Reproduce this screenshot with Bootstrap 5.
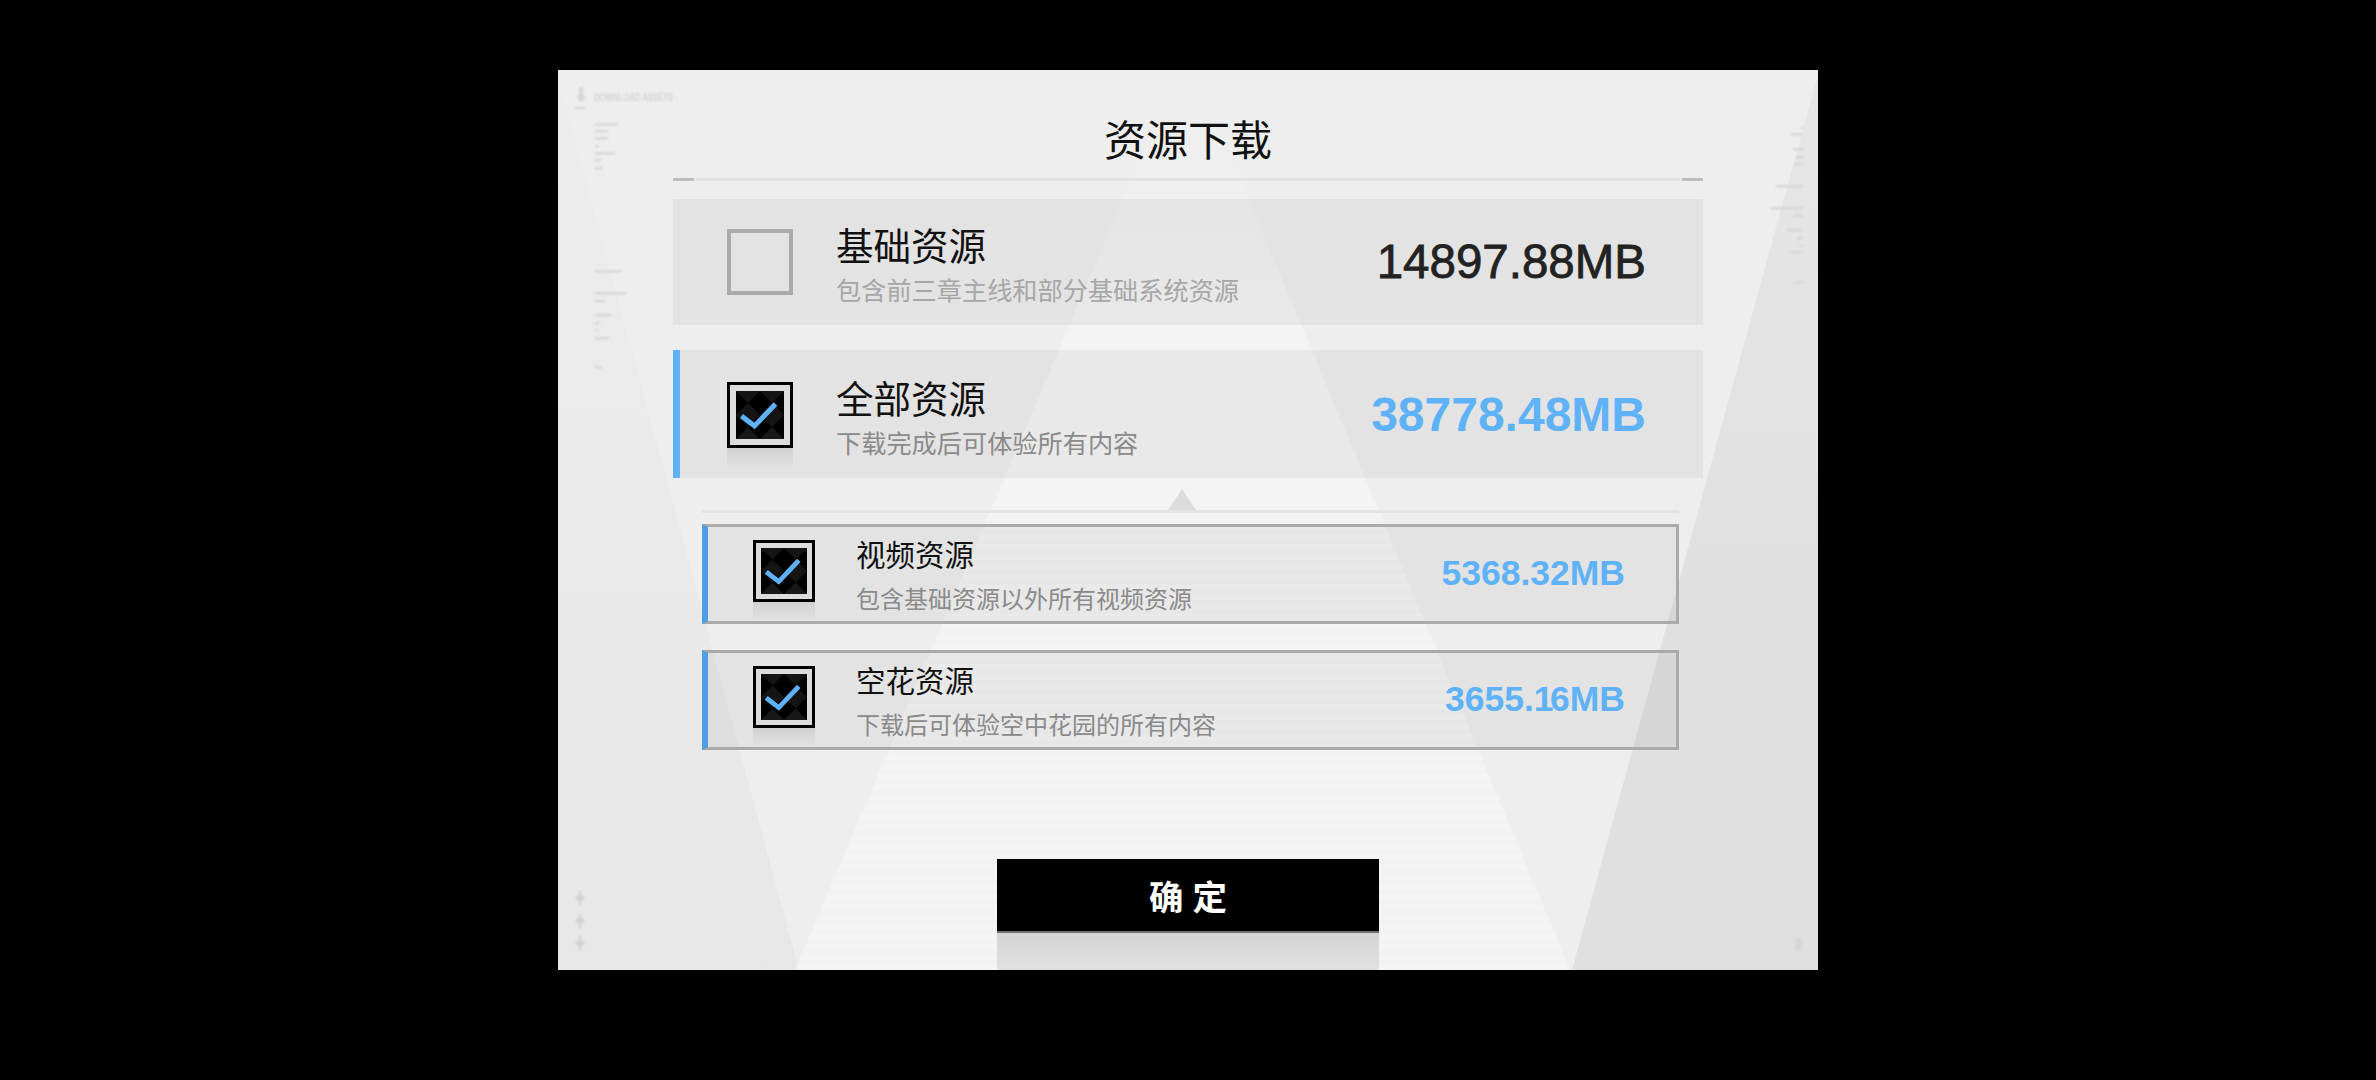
<!DOCTYPE html>
<html lang="zh-CN">
<head>
<meta charset="utf-8">
<title>资源下载</title>
<link href="https://cdn.jsdelivr.net/npm/bootstrap@5.3.0/dist/css/bootstrap.min.css" rel="stylesheet">
<style>
html,body{background:#000;margin:0;height:1080px;overflow:hidden}
body{font-family:"Noto Sans CJK SC","Liberation Sans",sans-serif}
.stage{width:1260px;height:900px;margin:70px auto 0;background:#eeeeee;position:relative;overflow:hidden}
.backdrop{position:absolute;left:0;top:0;width:1260px;height:900px}
.content{position:relative;height:900px;padding:0 115px}
.head-ttl{height:108px;margin:0;font-size:42px;font-weight:400;color:#111;line-height:1;padding-top:47px;text-align:center}
.head-rule{height:3px;background:#e2e2e2;margin-bottom:18px}
.head-rule i{display:block;width:21px;height:3px;background:#bcbcbc}
.dl-row{background:rgba(0,0,0,.042);height:126px;padding:0 57px 0 54px}
.dl-row.on{height:128px;margin-top:25px;border-left:7px solid #5fb1f8;padding-left:47px}
.cbx{width:66px;height:66px;flex:none;position:relative}
.cbx.off{border:4px solid #aaa}
.cbx.tick{border:3px solid #000;background:#dcdcdc;padding:6px}
.on>.cbx.tick{margin-top:2px}
.cbx.tick svg{display:block;width:100%;height:100%}
.cbx.tick::after{content:"";position:absolute;left:-3px;right:-3px;top:100%;margin-top:3px;height:22px;background:linear-gradient(rgba(0,0,0,.08),rgba(0,0,0,0))}
.txtb{margin-left:43px;padding-top:4px}
.on .txtb{padding-top:6px}
.ttl-a{font-size:37.5px;line-height:50px;color:#111}
.sub-a{font-size:25.2px;line-height:40px;color:#a6a6a6}
.on .sub-a{color:#8a8a8a}
.num-a{font-family:"Liberation Sans",sans-serif;font-size:47.5px;line-height:1;color:#222;-webkit-text-stroke:.8px #222}
.on .num-a{color:#5fb1f8;font-weight:700;font-size:48px;-webkit-text-stroke:0;margin-top:2px}
.subwrap{padding:11px 24px 0 29px}
.tri{width:0;height:0;border-left:14px solid transparent;border-right:14px solid transparent;border-bottom:21px solid #dcdcdc;margin-left:466px}
.sub-rule{height:3px;background:#e4e4e4;margin-bottom:11px}
.sub-row{height:100px;background:rgba(0,0,0,.045);border:3px solid #aaa;border-left:6px solid #4b9fe4;padding:0 51px 0 45px}
.sub-row+.sub-row{margin-top:26px}
.sub-row .cbx{width:62px;height:62px;margin-top:-7px}
.sub-row .cbx.tick{padding:5px}
.sub-row .cbx.tick::after{height:20px}
.sub-row .txtb{margin-left:41px;padding-top:3px}
.ttl-b{font-size:29.5px;line-height:42px;color:#111}
.sub-b{font-size:24px;line-height:42px;color:#8a8a8a;margin-top:3px}
.num-b{font-family:"Liberation Sans",sans-serif;font-weight:700;font-size:35.5px;line-height:1;color:#5fb1f8;margin-top:-1px}
.tight{letter-spacing:-3.5px}
.ok-wrap{margin-top:109px;text-align:center}
.ok-btn{display:block;width:382px;height:74px;margin:0 auto;padding:0;background:#000;color:#fff;border:0;border-bottom:2px solid #707070;border-radius:0;font-size:34.5px;font-weight:700;line-height:72px;letter-spacing:9px;text-indent:9px}
.ok-btn:hover,.ok-btn:active{background:#000!important;color:#fff!important}
.ok-ref{width:382px;height:37px;margin:0 auto;background:linear-gradient(#d4d4d4,#e1e1e1)}
</style>
</head>
<body>
<div class="stage">
  <svg class="backdrop" viewBox="0 0 1260 900" aria-hidden="true">
    <defs>
      <linearGradient id="lg" x1="0" y1="0" x2="0" y2="1"><stop offset="0" stop-color="#ededed"/><stop offset="1" stop-color="#e7e7e7"/></linearGradient>
      <linearGradient id="rg" x1="0" y1="0" x2="0" y2="1"><stop offset="0" stop-color="#e6e6e6"/><stop offset=".6" stop-color="#e0e0e0"/><stop offset="1" stop-color="#e0e0e0"/></linearGradient>
      <linearGradient id="cg" gradientUnits="userSpaceOnUse" x1="0" y1="0" x2="0" y2="900"><stop offset="0" stop-color="#eeeeee"/><stop offset=".12" stop-color="#efefef"/><stop offset=".3" stop-color="#f4f4f4"/><stop offset="1" stop-color="#f4f4f4"/></linearGradient>
      <pattern id="st" width="10" height="10" patternUnits="userSpaceOnUse"><rect width="10" height="4" fill="#000" opacity=".008"/></pattern>
      <filter id="bl" x="-20%" y="-20%" width="140%" height="140%"><feGaussianBlur stdDeviation=".9"/></filter>
    </defs>
    <polygon points="0,7 0,900 241,900" fill="url(#lg)"/>
    <polygon points="1260,5 1260,900 1014,900" fill="url(#rg)"/>
    <polygon points="620,0 637,0 1012,900 237,900" fill="url(#cg)"/>
    <polygon points="430,450 825,450 1012,900 237,900" fill="url(#st)"/>
    <g fill="#d6d6d6" filter="url(#bl)">
      <rect x="37" y="53" width="23" height="2.500"/><rect x="37" y="60" width="13" height="2.500"/><rect x="37" y="67" width="13" height="2.500"/><rect x="37" y="75" width="4" height="2.500"/><rect x="37" y="82" width="20" height="2.500"/><rect x="37" y="89" width="6" height="2.500"/><rect x="37" y="97" width="8" height="2.500"/>
      <rect x="37" y="200" width="26" height="2.500"/><rect x="37" y="222" width="31" height="2.500"/><rect x="37" y="230" width="10" height="2.500"/><rect x="37" y="244" width="16" height="2.500"/><rect x="37" y="252" width="5" height="2.500"/><rect x="37" y="259" width="3" height="2.500"/><rect x="37" y="267" width="14" height="2.500"/><rect x="37" y="296" width="7" height="2.500"/>
      <rect x="1243" y="56" width="2" height="2.500"/><rect x="1232" y="63" width="13" height="2.500"/><rect x="1235" y="78" width="10" height="2.500"/><rect x="1238" y="86" width="7" height="2.500"/><rect x="1236" y="93" width="9" height="2.500"/><rect x="1218" y="115" width="27" height="2.500"/><rect x="1213" y="137" width="32" height="2.500"/><rect x="1235" y="144" width="10" height="2.500"/><rect x="1229" y="159" width="16" height="2.500"/><rect x="1239" y="167" width="6" height="2.500"/><rect x="1242" y="174" width="3" height="2.500"/><rect x="1231" y="181" width="14" height="2.500"/><rect x="1236" y="211" width="9" height="2.500"/>
      <rect x="1237" y="868" width="7" height="13"/>
      <path d="M21 17h4v9h3.500L23 33l-5.500-7H21zM17 37h11v2H17z"/>
    </g>
    <g fill="#cfcfcf" filter="url(#bl)">
      <path d="M21 821h2v5h3v4h-3v5h-2v-5h-3v-4h3zM21 844h2v5h3v4h-3v5h-2v-5h-3v-4h3zM21 866h2v5h3v4h-3v5h-2v-5h-3v-4h3z"/>
    </g>
    <text x="36" y="31" font-family="Liberation Sans, sans-serif" font-size="11" font-weight="700" fill="#d4d4d4" textLength="79" lengthAdjust="spacingAndGlyphs" filter="url(#bl)">DOWNLOAD ASSETS</text>
  </svg>

  <div class="content d-flex flex-column">
    <h1 class="head-ttl">资源下载</h1>
    <div class="head-rule d-flex justify-content-between"><i></i><i></i></div>

    <div class="dl-row d-flex align-items-center">
      <div class="cbx off"></div>
      <div class="txtb flex-grow-1">
        <div class="ttl-a">基础资源</div>
        <div class="sub-a">包含前三章主线和部分基础系统资源</div>
      </div>
      <div class="num-a">14897.88MB</div>
    </div>

    <div class="dl-row on d-flex align-items-center">
      <div class="cbx tick"><svg viewBox="0 0 48 48"><rect width="48" height="48" fill="#000"/><path d="M0 0l12 12L24 0zM24 0l12 12L48 0zM0 24l12-12 12 12 12-12 12 12-12 12-12-12-12 12z" fill="#141414"/><path d="M0 48l12-12 12 12 12-12 12 12z" fill="#181818"/><path d="M5.500 25l13 10 21-22" fill="none" stroke="#5fb1f8" stroke-width="5"/></svg></div>
      <div class="txtb flex-grow-1">
        <div class="ttl-a">全部资源</div>
        <div class="sub-a">下载完成后可体验所有内容</div>
      </div>
      <div class="num-a">38778.48MB</div>
    </div>

    <div class="subwrap">
      <div class="tri"></div>
      <div class="sub-rule"></div>

      <div class="sub-row d-flex align-items-center">
        <div class="cbx tick"><svg viewBox="0 0 48 48"><rect width="48" height="48" fill="#000"/><path d="M0 0l12 12L24 0zM24 0l12 12L48 0zM0 24l12-12 12 12 12-12 12 12-12 12-12-12-12 12z" fill="#141414"/><path d="M0 48l12-12 12 12 12-12 12 12z" fill="#181818"/><path d="M5.500 25l13 10 21-22" fill="none" stroke="#5fb1f8" stroke-width="5"/></svg></div>
        <div class="txtb flex-grow-1">
          <div class="ttl-b">视频资源</div>
          <div class="sub-b">包含基础资源以外所有视频资源</div>
        </div>
        <div class="num-b">5368.32MB</div>
      </div>

      <div class="sub-row d-flex align-items-center">
        <div class="cbx tick"><svg viewBox="0 0 48 48"><rect width="48" height="48" fill="#000"/><path d="M0 0l12 12L24 0zM24 0l12 12L48 0zM0 24l12-12 12 12 12-12 12 12-12 12-12-12-12 12z" fill="#141414"/><path d="M0 48l12-12 12 12 12-12 12 12z" fill="#181818"/><path d="M5.500 25l13 10 21-22" fill="none" stroke="#5fb1f8" stroke-width="5"/></svg></div>
        <div class="txtb flex-grow-1">
          <div class="ttl-b">空花资源</div>
          <div class="sub-b">下载后可体验空中花园的所有内容</div>
        </div>
        <div class="num-b">3655.<span class="tight">1</span>6MB</div>
      </div>
    </div>

    <div class="ok-wrap">
      <button type="button" class="btn ok-btn">确定</button>
      <div class="ok-ref"></div>
    </div>
  </div>
</div>
<script src="https://cdn.jsdelivr.net/npm/bootstrap@5.3.0/dist/js/bootstrap.bundle.min.js"></script>
</body>
</html>
